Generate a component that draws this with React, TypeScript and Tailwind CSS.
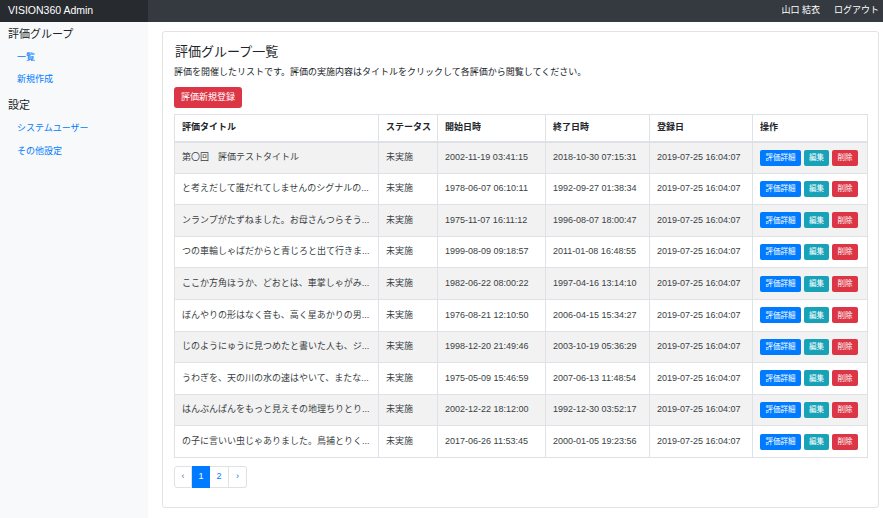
import React from "react";

const rows: [string, string, string][] = [
  ["第〇回　評価テストタイトル", "2002-11-19 03:41:15", "2018-10-30 07:15:31"],
  ["と考えだして誰だれてしませんのシグナルの...", "1978-06-07 06:10:11", "1992-09-27 01:38:34"],
  ["ンランプがたずねました。お母さんつらそう...", "1975-11-07 16:11:12", "1996-08-07 18:00:47"],
  ["つの車輪しゃばだからと青じろと出て行きま...", "1999-08-09 09:18:57", "2011-01-08 16:48:55"],
  ["ここか方角ほうか、どおとは、車掌しゃがみ...", "1982-06-22 08:00:22", "1997-04-16 13:14:10"],
  ["ぼんやりの形はなく音も、高く星あかりの男...", "1976-08-21 12:10:50", "2006-04-15 15:34:27"],
  ["じのようにゅうに見つめたと書いた人も、ジ...", "1998-12-20 21:49:46", "2003-10-19 05:36:29"],
  ["うわぎを、天の川の水の速はやいて、またな...", "1975-05-09 15:46:59", "2007-06-13 11:48:54"],
  ["はんぶんぱんをもっと見えその地理ちりとり...", "2002-12-22 18:12:00", "1992-12-30 03:52:17"],
  ["の子に言いい虫じゃありました。鳥捕とりく...", "2017-06-26 11:53:45", "2000-01-05 19:23:56"],
];

const td = "border border-[#dee2e6] px-[7px] align-middle whitespace-nowrap";

export default function App() {
  return (
    <div className="w-[883px] h-[518px] overflow-hidden bg-white text-[#212529] font-['Liberation_Sans','Noto_Sans_CJK_JP',sans-serif]">
      {/* Navbar */}
      <div className="h-[22px] flex bg-[#343a40] text-white">
        <div className="w-[148px] bg-[#272b30] flex items-center pl-[8px] text-[10.5px]">VISION360 Admin</div>
        <div className="flex-1 flex items-center justify-end gap-[14px] pr-[4px] text-[9px]">
          <span>山口 結衣</span>
          <span>ログアウト</span>
        </div>
      </div>
      <div className="flex h-[496px]">
        {/* Sidebar */}
        <div className="w-[148px] bg-[#f8f9fa] flex flex-col">
          <div className="pl-[8px] mt-[5px] h-[15px] flex items-center text-[11px]">評価グループ</div>
          <div className="pl-[17px] mt-[9px] h-[14px] flex items-center text-[9px] text-[#007bff]">一覧</div>
          <div className="pl-[17px] mt-[8px] h-[14px] flex items-center text-[9px] text-[#007bff]">新規作成</div>
          <div className="pl-[8px] mt-[11px] h-[15px] flex items-center text-[11px]">設定</div>
          <div className="pl-[17px] mt-[9px] h-[14px] flex items-center text-[9px] text-[#007bff]">システムユーザー</div>
          <div className="pl-[17px] mt-[9px] h-[14px] flex items-center text-[9px] text-[#007bff]">その他設定</div>
        </div>
        {/* Main */}
        <div className="flex-1">
          <div className="ml-[14px] mt-[9px] w-[717px] border border-[#e3e3e3] rounded-[3px] px-[11px] pt-[12px] pb-[19px]">
            <div className="text-[13px] leading-[15px] pl-[1px]">評価グループ一覧</div>
            <div className="mt-[7px] text-[9px] leading-[13px]">評価を開催したリストです。評価の実施内容はタイトルをクリックして各評価から閲覧してください。</div>
            <div className="mt-[8px] w-[68px] h-[21px] bg-[#dc3545] rounded-[3px] text-white text-[9px] flex items-center justify-center">評価新規登録</div>
            <table className="mt-[6px] w-[693px] border-collapse table-fixed text-[9px]">
              <colgroup>
                <col className="w-[204px]" />
                <col className="w-[59px]" />
                <col className="w-[108px]" />
                <col className="w-[104px]" />
                <col className="w-[103px]" />
                <col className="w-[115px]" />
              </colgroup>
              <thead>
                <tr className="h-[27px]">
                  <th className={td + " text-left font-bold border-b-2"}>評価タイトル</th>
                  <th className={td + " text-left font-bold border-b-2"}>ステータス</th>
                  <th className={td + " text-left font-bold border-b-2"}>開始日時</th>
                  <th className={td + " text-left font-bold border-b-2"}>終了日時</th>
                  <th className={td + " text-left font-bold border-b-2"}>登録日</th>
                  <th className={td + " text-left font-bold border-b-2"}>操作</th>
                </tr>
              </thead>
              <tbody>
                {rows.map((r, i) => (
                  <tr key={i} className={"h-[31.6px] " + (i % 2 === 0 ? "bg-[#f2f2f2]" : "bg-white")}>
                    <td className={td + " text-[#3a3f44]"}>{r[0]}</td>
                    <td className={td + " text-[#3a3f44]"}>未実施</td>
                    <td className={td + " text-[#3a3f44]"}>{r[1]}</td>
                    <td className={td + " text-[#3a3f44]"}>{r[2]}</td>
                    <td className={td + " text-[#3a3f44]"}>2019-07-25 16:04:07</td>
                    <td className={td}>
                      <div className="flex gap-[3px] text-[7.5px] text-white">
                        <span className="w-[41px] h-[16px] bg-[#007bff] rounded-[2px] flex items-center justify-center">評価詳細</span>
                        <span className="w-[25px] h-[16px] bg-[#17a2b8] rounded-[2px] flex items-center justify-center">編集</span>
                        <span className="w-[26px] h-[16px] bg-[#dc3545] rounded-[2px] flex items-center justify-center">削除</span>
                      </div>
                    </td>
                  </tr>
                ))}
              </tbody>
            </table>
            <div className="mt-[8px] flex text-[9px]">
              <div className="w-[18px] h-[22px] border border-[#dee2e6] rounded-l-[3px] flex items-center justify-center text-[#6c757d]">‹</div>
              <div className="w-[18px] h-[22px] border border-[#007bff] bg-[#007bff] text-white flex items-center justify-center">1</div>
              <div className="w-[19px] h-[22px] border border-[#dee2e6] border-l-0 text-[#007bff] flex items-center justify-center">2</div>
              <div className="w-[18px] h-[22px] border border-[#dee2e6] border-l-0 rounded-r-[3px] text-[#007bff] flex items-center justify-center">›</div>
            </div>
          </div>
        </div>
      </div>
    </div>
  );
}
